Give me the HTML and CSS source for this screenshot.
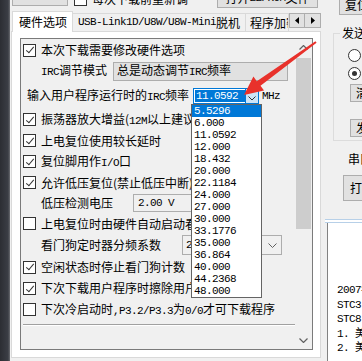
FILE: index.html
```html
<!DOCTYPE html>
<html lang="zh-CN">
<head>
<meta charset="utf-8">
<title>硬件选项</title>
<link rel="stylesheet" href="styles.css">
</head>
<body>
<div class="win">
  <div class="desk"></div>
  <div class="main">
    <div class="topbar">
      <div class="tb-b1"></div>
      <div class="tb-chk"><span class="tb-cb"></span><span class="tb-txt">每次下载前重新调</span></div>
      <div class="tb-b2">打开<span class="lat">EEPROM</span>文件</div>
    </div>
    <div class="tabs">
      <div class="tab sel">硬件选项</div>
      <div class="tab t2"><span class="lat">USB-Link1D/U8W/U8W-Mini</span>脱机</div>
      <div class="tab t3">程序加密后传输</div>
      <div class="tabarrows">
        <span class="ta"><svg width="5" height="7" viewBox="0 0 5 7"><path d="M4 0 L0 3.5 L4 7Z" fill="#000"/></svg></span>
        <span class="ta"><svg width="5" height="7" viewBox="0 0 5 7"><path d="M1 0 L5 3.5 L1 7Z" fill="#000"/></svg></span>
      </div>
    </div>
    <div class="panel">
      <div class="box">
        <div class="content">
          <div class="row r1"><span class="cb on"></span><span class="lbl">本次下载需要修改硬件选项</span></div>
          <div class="row r2 ind"><span class="lbl w72"><span class="lat">IRC</span>调节模式</span><div class="combo c-irc"><span>总是动态调节<span class="lat">IRC</span>频率</span></div></div>
          <div class="row r3"><span class="lbl"><span>输入用户程序运行时的</span><span class="lat">IRC</span>频率</span>
            <div class="ecombo"><span class="sel-txt lat">11.0592</span><span class="ebtn"><svg width="8" height="5" viewBox="0 0 8 5"><path d="M0.5 0.5 L4 4 L7.5 0.5" fill="none" stroke="#333" stroke-width="1"/></svg></span></div>
            <span class="lat mhz">MHz</span></div>
          <div class="row r4"><span class="cb on"></span><span class="lbl">振荡器放大增益(<span class="lat">12M</span>以上建议选择)</span></div>
          <div class="row"><span class="cb on"></span><span class="lbl">上电复位使用较长延时</span></div>
          <div class="row"><span class="cb on"></span><span class="lbl">复位脚用作<span class="lat">I/O</span>口</span></div>
          <div class="row"><span class="cb on"></span><span class="lbl">允许低压复位(禁止低压中断)</span></div>
          <div class="row r8 ind"><span class="lbl w92">低压检测电压</span><div class="combo c-lv"><span class="lat">2.00 V</span></div></div>
          <div class="row"><span class="cb"></span><span class="lbl">上电复位时由硬件自动启动看门狗</span></div>
          <div class="row r10 ind"><span class="lbl w141">看门狗定时器分频系数</span><div class="combo c-wd"><span class="lat">256</span><svg class="chev" width="9" height="5" viewBox="0 0 9 5"><path d="M0.5 0.5 L4.5 4.5 L8.5 0.5" fill="none" stroke="#606060" stroke-width="1"/></svg></div></div>
          <div class="row r11"><span class="cb on"></span><span class="lbl">空闲状态时停止看门狗计数</span></div>
          <div class="row"><span class="cb on"></span><span class="lbl">下次下载用户程序时擦除用户<span class="lat">EEPROM</span>区</span></div>
          <div class="row"><span class="cb"></span><span class="lbl">下次冷启动时<span class="lat">,P3.2/P3.3</span>为<span class="lat">0/0</span>才可下载程序</span></div>
          <div class="sep"></div>
        </div>
        <div class="vscroll">
          <div class="sarrow"><svg width="9" height="5" viewBox="0 0 9 5"><path d="M0.5 4.5 L4.5 0.5 L8.5 4.5" fill="none" stroke="#606060" stroke-width="1.2"/></svg></div>
          <div class="thumb"></div>
          <div class="track"></div>
          <div class="sarrow"><svg width="9" height="5" viewBox="0 0 9 5"><path d="M0.5 0.5 L4.5 4.5 L8.5 0.5" fill="none" stroke="#606060" stroke-width="1.2"/></svg></div>
        </div>
      </div>
    </div>
  </div>
  <div class="side">
    <div class="s-btn s-top">复位</div>
    <div class="grp">
      <div class="grp-lbl">发送</div>
      <div class="radio"></div>
      <div class="radio on"></div>
      <div class="s-btn s-clr">清空</div>
      <div class="s-btn s-send">发送</div>
    </div>
    <div class="s-lbl">串口</div>
    <div class="s-btn s-open">打开</div>
    <div class="splitter"></div>
    <div class="log">
      <div class="log-line">2007年</div>
      <div class="log-line">STC3</div>
      <div class="log-line">STC8</div>
      <div class="log-line">1. 美</div>
      <div class="log-line">2. 美</div>
    </div>
  </div>
</div>
<div class="droplist">
  <div class="it hi">5.5296</div>
  <div class="it">6.000</div>
  <div class="it">11.0592</div>
  <div class="it">12.000</div>
  <div class="it">18.432</div>
  <div class="it">20.000</div>
  <div class="it">22.1184</div>
  <div class="it">24.000</div>
  <div class="it">27.000</div>
  <div class="it">30.000</div>
  <div class="it">33.1776</div>
  <div class="it">35.000</div>
  <div class="it">36.864</div>
  <div class="it">40.000</div>
  <div class="it">44.2368</div>
  <div class="it">48.000</div>
</div>
<svg class="arrow" width="362" height="361" viewBox="0 0 362 361">
  <polygon points="315.4,41.3 256.8,81.2 253.4,76.5 244,95 264,90.5 260.5,85.8 316.6,42.7" fill="#e8312b"/>
</svg>
</body>
</html>
```

FILE: styles.css
```css
* { box-sizing: border-box; margin: 0; padding: 0; }
html, body { width: 362px; height: 361px; overflow: hidden; }
body {
  background: #f0f0f0;
  font-family: "Noto Sans CJK SC", "Noto Sans", sans-serif;
  font-size: 12px;
  line-height: 1;
  color: #000;
}
.lat { font-family: "Liberation Mono", monospace; font-size: 11px; letter-spacing: -0.6px; }

.win { display: flex; width: 362px; height: 361px; overflow: hidden; }
.desk { width: 10px; flex: none; background: linear-gradient(90deg, #2c2e33 0, #3b3e45 80%, #6a6c70 100%); }
.main { width: 312px; flex: none; display: flex; flex-direction: column; }

/* partial top row */
.topbar { height: 10px; flex: none; display: flex; align-items: flex-end; position: relative; overflow: hidden; }
.tb-b1 { width: 56px; height: 14px; margin-left: 2px; margin-bottom: 4px; border: 1px solid #adadad; background: #e1e1e1; }
.tb-chk { display: flex; align-items: flex-end; margin-left: 6px; height: 10px; overflow: hidden; }
.tb-cb { width: 13px; height: 13px; border: 1px solid #333; background: #fff; margin-bottom: 4px; }
.tb-txt { margin-left: 5px; margin-bottom: 5px; }
.tb-b2 { margin-left: auto; margin-right: 4px; width: 101px; height: 20px; margin-bottom: 2px; border: 1px solid #adadad; background: #e1e1e1; display: flex; align-items: center; justify-content: center; }

/* tabs */
.tabs { height: 21px; flex: none; display: flex; align-items: flex-end; padding-left: 2px; position: relative; z-index: 1; }
.tab { height: 18px; border: 1px solid #d9d9d9; border-bottom: none; background: #f0f0f0; display: flex; align-items: center; padding: 0 5px; white-space: nowrap; overflow: hidden; }
.tab.sel { height: 21px; width: 61px; background: #fff; margin-bottom: -1px; padding: 0 6px; }
.tab.t2 { width: 173px; border-left: none; }
.tab.t3 { width: 43px; border-left: none; padding-left: 4px; }
.tabarrows { display: flex; margin-bottom: 3px; height: 15px; }
.ta { width: 16px; height: 15px; border: 1px solid #adadad; background: #e1e1e1; display: flex; align-items: center; justify-content: center; }
.ta + .ta { border-left: none; }

/* panel */
.panel { margin-left: 1px; width: 310px; height: 327px; flex: none; border: 1px solid #d9d9d9; background: #fff; padding: 6px 0 0 8px; }
.box { width: 293px; height: 312px; border: 1px solid #7a7a7a; background: #f0f0f0; display: flex; }
.content { flex: 1; overflow: hidden; display: flex; flex-direction: column; }
.row { height: 21px; flex: none; display: flex; align-items: center; padding-left: 2px; white-space: nowrap; }
.row.ind { padding-left: 20px; }
.r1 { height: 22px; }
.r2 { height: 20px; }
.r3 { height: 20px; margin-top: 5px; padding-left: 6px; }
.r4 { margin-top: 3px; }
.r8 { height: 20px; }
.r10, .r11 { height: 22px; }
.cb { width: 13px; height: 13px; flex: none; border: 1px solid #333; background: #fff; position: relative; margin-right: 5px; }
.cb.on::after { content: ""; position: absolute; left: 3.5px; top: 0.5px; width: 3px; height: 7px; border: solid #333; border-width: 0 1px 1px 0; transform: rotate(40deg); }
.lbl { display: flex; align-items: baseline; }
.w72 { width: 72px; }
.w92 { width: 92px; }
.w141 { width: 141px; }

.combo { height: 19px; border: 1px solid #adadad; background: #e1e1e1; display: flex; align-items: center; padding-left: 3px; position: relative; }
.c-irc { width: 175px; }
.c-lv { width: 100px; height: 18px; background: #f0f0f0; padding-left: 4px; }
.c-wd { width: 100px; height: 20px; background: #f0f0f0; }
.chev { position: absolute; right: 4px; top: 7px; }

.ecombo { margin-left: 4px; width: 66px; height: 16px; border: 1px solid #0078d7; background: #fff; display: flex; align-items: stretch; }
.sel-txt { width: 50px; background: #0078d7; color: #fff; margin: 1px 0 1px 1px; display: flex; align-items: center; padding-left: 1px; }
.ebtn { flex: 1; display: flex; align-items: center; justify-content: center; background: #cce4f7; border-left: 1px solid #0078d7; padding-top: 4px; }
.mhz { margin-left: 3px; }

.sep { margin: 4px 0 0 2px; height: 2px; border-top: 1px solid #a0a0a0; border-bottom: 1px solid #fff; }

.vscroll { width: 17px; flex: none; background: #f0f0f0; display: flex; flex-direction: column; }
.sarrow { height: 17px; display: flex; align-items: center; justify-content: center; }
.thumb { height: 171px; margin: 2px 1px 0 1px; background: #cdcdcd; }
.track { flex: 1; }

/* right side */
.side { flex: 1; position: relative; display: flex; flex-direction: column; padding-left: 3px; }
.s-btn { border: 1px solid #adadad; background: #e1e1e1; display: flex; align-items: center; padding-left: 5px; white-space: nowrap; overflow: hidden; }
.s-top { margin: -6px 0 0 14px; height: 21px; width: 50px; }
.grp { margin: 18px 0 0 8px; height: 108px; border: 1px solid #dcdcdc; border-right: none; position: relative; padding-top: 10px; }
.grp-lbl { position: absolute; top: -7px; left: 6px; background: #f0f0f0; padding: 0 2px; }
.radio { width: 13px; height: 13px; border: 1px solid #333; border-radius: 50%; background: #fff; margin: 5px 0 0 14px; position: relative; }
.radio.on::after { content: ""; position: absolute; left: 3px; top: 3px; width: 5px; height: 5px; border-radius: 50%; background: #333; }
.s-clr { margin: 4px 0 0 16px; height: 18px; width: 40px; }
.s-send { margin: 17px 0 0 16px; height: 18px; width: 40px; }
.s-lbl { margin: 12px 0 0 23px; }
.s-open { margin: 10px 0 0 18px; height: 26px; width: 40px; padding-left: 6px; }
.splitter { margin-top: 18px; height: 4px; border-top: 1px solid #b7d0e8; border-bottom: 1px solid #b7d0e8; background: #fff; }
.log { flex: 1; margin-left: 2px; background: #fff; border-left: 1px solid #828282; padding: 62px 0 0 9px; }
.log-line { height: 14.5px; font-family: "Liberation Mono", "Noto Sans CJK SC", monospace; font-size: 11px; letter-spacing: -0.6px; white-space: nowrap; }

/* dropdown overlay */
.droplist { position: absolute; left: 191px; top: 104px; width: 71px; height: 194px; border: 1px solid #646464; background: #fff; font-family: "Liberation Mono", monospace; font-size: 11px; letter-spacing: -0.6px; z-index: 5; }
.it { height: 12px; padding-left: 2px; display: flex; align-items: center; }
.it.hi { background: #0078d7; color: #fff; }

.arrow { position: absolute; left: 0; top: 0; z-index: 6; pointer-events: none; }
```
